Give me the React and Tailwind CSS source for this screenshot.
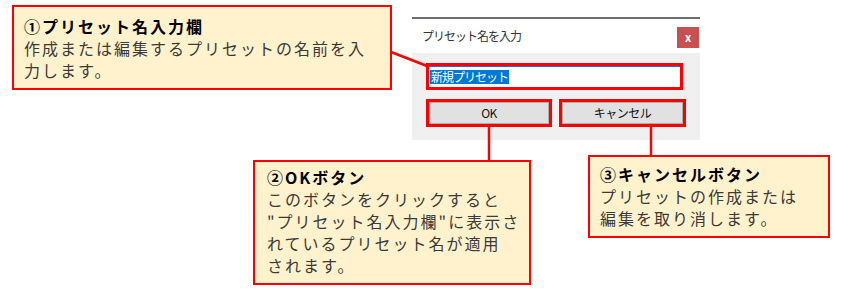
const JP = { fontFamily: '"Noto Sans CJK JP", "Noto Sans", sans-serif' };

function Callout({ className, title, lines }) {
  return (
    <div
      className={`absolute box-border whitespace-nowrap border-2 border-[#ff0000] bg-[#fff2cc] px-[10px] text-[16px] leading-[22px] tracking-[2px] ${className}`}
      style={JP}
    >
      <div className="font-bold text-black">{title}</div>
      {lines.map((l) => (
        <div key={l} className="text-[#3a3a3a]">{l}</div>
      ))}
    </div>
  );
}

function DialogButton({ label, width }) {
  return (
    <div className={`box-border h-[28px] border-[3px] border-[#ff0000] ${width}`}>
      <div className="flex h-full items-center justify-center border border-[#adadad] bg-[#e1e1e1] text-[12px] text-[#111] tracking-[-0.5px]">
        {label}
      </div>
    </div>
  );
}

export default function App() {
  return (
    <div className="relative h-[295px] w-[850px] overflow-hidden bg-white" style={JP}>
      {/* dialog */}
      <div className="absolute left-[412px] top-[17px] flex w-[288px] flex-col">
        <div className="h-[2px] bg-[#6e6e6e]" />
        <div className="flex h-[34px] items-center justify-between bg-white pl-[10px] pr-[1px]">
          <span className="text-[12px] tracking-[-1px] text-[#333]">プリセット名を入力</span>
          <span className="mt-[2px] flex h-[21px] w-[22px] items-center justify-center bg-[#c75050] text-[11px] font-bold leading-none text-white">
            x
          </span>
        </div>
        <div className="flex h-[87px] flex-col bg-[#f0f0f0] pl-[14px] pt-[10px]">
          <div className="box-border h-[27px] w-[257px] border-[3px] border-[#ff0000]">
            <div className="flex h-full items-center border-t border-[#0078d7] bg-white pl-[1px]">
              <span className="bg-[#0078d7] px-[1px] text-[12px] leading-[14px] tracking-[-1px] text-white">新規プリセット</span>
            </div>
          </div>
          <div className="mt-[9px] flex gap-[7px]">
            <DialogButton label="OK" width="w-[126px]" />
            <DialogButton label="キャンセル" width="w-[127px]" />
          </div>
        </div>
      </div>

      {/* connector lines */}
      <svg className="absolute left-0 top-0" width="850" height="295">
        <line x1="391" y1="52" x2="427" y2="66" stroke="#ff0000" strokeWidth="2.5" />
        <line x1="489" y1="127" x2="489" y2="161" stroke="#ff0000" strokeWidth="2.5" />
        <line x1="651" y1="127" x2="651" y2="156" stroke="#ff0000" strokeWidth="2.5" />
      </svg>

      <Callout
        className="left-[12px] top-[5px] h-[85px] w-[380px] pt-[8px]"
        title="①プリセット名入力欄"
        lines={['作成または編集するプリセットの名前を入', '力します。']}
      />
      <Callout
        className="left-[253px] top-[160px] h-[125px] w-[278px] pl-[12px] pt-[4px]"
        title="②OKボタン"
        lines={['このボタンをクリックすると', '"プリセット名入力欄"に表示さ', 'れているプリセット名が適用', 'されます。']}
      />
      <Callout
        className="left-[588px] top-[155px] h-[83px] w-[242px] pt-[6px]"
        title="③キャンセルボタン"
        lines={['プリセットの作成または', '編集を取り消します。']}
      />
    </div>
  );
}
